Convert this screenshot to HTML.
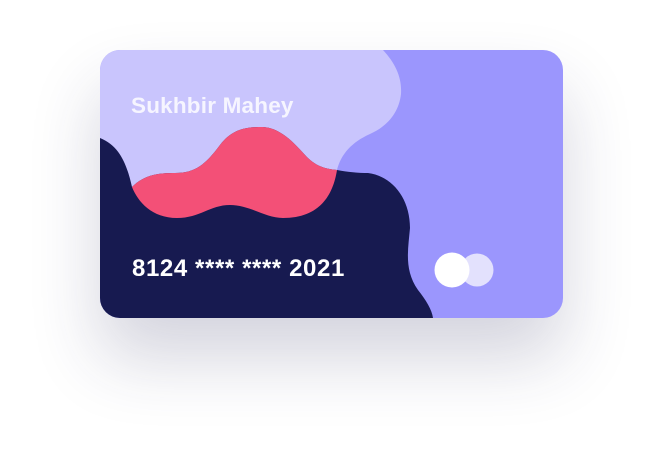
<!DOCTYPE html>
<html><head><style>
html,body{margin:0;padding:0;background:#fff;width:663px;height:468px;overflow:hidden}
.card{position:absolute;left:100px;top:50px;width:463px;height:268px;border-radius:20px;overflow:hidden;background:#9b96fd;box-shadow:0 40px 70px rgba(40,40,90,0.2)}
svg{position:absolute;left:0;top:0}
.t{position:absolute;font-family:"Liberation Sans",sans-serif;font-weight:bold;color:#fff;white-space:nowrap}
</style></head><body>
<div class="card">
<svg width="463" height="268" viewBox="0 0 463 268">
<path d="M0 0 H283 C296 14 302 28 301 44 C299 62 288 76 270 84 C252 92 241 104 237 120 L240 170 L0 170 Z" fill="#c9c5fd"/>
<path d="M0 88 C20 96 27 115 32 137 C45 124 60 123 75 123 C95 123 105 115 120 95 C133 78 148 77 163 77 C178 78 190 88 205 105 C215 116 225 119 237 120 C248 122 258 123 268 123 C292 126 310 148 310 178 C308 200 304 220 318 240 C326 250 332 260 333 268 L0 268 Z" fill="#171a50"/>
<path d="M32 137 C45 124 60 123 75 123 C95 123 105 115 120 95 C133 78 148 77 163 77 C178 78 190 88 205 105 C215 116 225 119 237 120 C233 145 220 168 183 168 C165 168 150 155 130 155 C110 155 100 168 77 168 C52 168 38 152 32 137 Z" fill="#f35077"/>
<circle cx="377" cy="220" r="16.5" fill="#e3e1fd"/>
<circle cx="352" cy="220" r="17.5" fill="#fff"/>
</svg>
<div class="t" style="left:31px;top:43px;font-size:22.5px;color:#f6f5ff;letter-spacing:0.2px">Sukhbir Mahey</div>
<div class="t" style="left:32px;top:205px;font-size:24px;letter-spacing:0.6px">8124 **** **** 2021</div>
</div>
</body></html>
